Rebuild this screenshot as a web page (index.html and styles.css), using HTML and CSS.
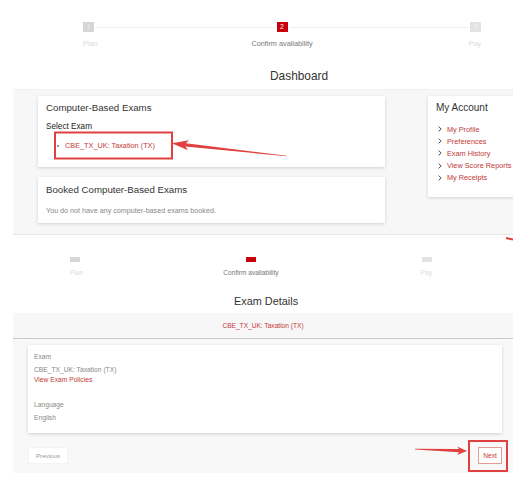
FILE: index.html
```html
<!DOCTYPE html>
<html lang="en">
<head>
<meta charset="utf-8">
<title>Dashboard</title>
<link rel="stylesheet" href="styles.css">
</head>
<body>
  <!-- Dashboard view -->
  <div class="view view-dash">
    <div class="stepper stepper-top">
      <div class="steps-row">
        <span class="step-box step-done">1</span>
        <span class="step-line"></span>
        <span class="step-box step-current">2</span>
        <span class="step-line"></span>
        <span class="step-box step-next">3</span>
      </div>
      <div class="step-labels">
        <span class="step-label step-label-start">Plan</span>
        <span class="step-label step-label-current">Confirm availability</span>
        <span class="step-label step-label-end">Pay</span>
      </div>
    </div>

    <h1 class="page-title dash-title">Dashboard</h1>

    <div class="dash-panel">
      <div class="dash-main">
        <section class="card exams-card">
          <h2 class="card-title">Computer-Based Exams</h2>
          <div class="select-label">Select Exam</div>
          <ul class="exam-list">
            <li class="exam-item"><a class="link">CBE_TX_UK: Taxation (TX)</a></li>
          </ul>
        </section>
        <section class="card booked-card">
          <h2 class="card-title">Booked Computer-Based Exams</h2>
          <p class="muted-note">You do not have any computer-based exams booked.</p>
        </section>
      </div>
      <aside class="card account-card">
        <h2 class="account-title">My Account</h2>
        <ul class="account-links">
          <li><svg class="chev" viewBox="0 0 4 6"><path d="M0.6 0.6 L3.2 3 L0.6 5.4" fill="none" stroke="#444" stroke-width="0.9"/></svg><a class="link">My Profile</a></li>
          <li><svg class="chev" viewBox="0 0 4 6"><path d="M0.6 0.6 L3.2 3 L0.6 5.4" fill="none" stroke="#444" stroke-width="0.9"/></svg><a class="link">Preferences</a></li>
          <li><svg class="chev" viewBox="0 0 4 6"><path d="M0.6 0.6 L3.2 3 L0.6 5.4" fill="none" stroke="#444" stroke-width="0.9"/></svg><a class="link">Exam History</a></li>
          <li><svg class="chev" viewBox="0 0 4 6"><path d="M0.6 0.6 L3.2 3 L0.6 5.4" fill="none" stroke="#444" stroke-width="0.9"/></svg><a class="link">View Score Reports</a></li>
          <li><svg class="chev" viewBox="0 0 4 6"><path d="M0.6 0.6 L3.2 3 L0.6 5.4" fill="none" stroke="#444" stroke-width="0.9"/></svg><a class="link">My Receipts</a></li>
        </ul>
      </aside>
    </div>
  </div>

  <!-- Exam details view -->
  <div class="view view-details">
    <div class="stepper stepper-small">
      <div class="steps-row">
        <span class="step-box step-done"></span>
        <span class="step-gap"></span>
        <span class="step-box step-current"></span>
        <span class="step-gap"></span>
        <span class="step-box step-next"></span>
      </div>
      <div class="step-labels">
        <span class="step-label step-label-start">Plan</span>
        <span class="step-label step-label-current">Confirm availability</span>
        <span class="step-label step-label-end">Pay</span>
      </div>
    </div>

    <h1 class="page-title details-title">Exam Details</h1>

    <div class="details-panel">
      <div class="details-head">CBE_TX_UK: Taxation (TX)</div>
      <div class="details-body">
        <div class="card details-card">
          <div class="field-label">Exam</div>
          <div class="field-value">CBE_TX_UK: Taxation (TX)</div>
          <a class="link policies-link">View Exam Policies</a>
          <div class="field-label field-gap">Language</div>
          <div class="field-value">English</div>
        </div>
        <div class="nav-row">
          <button class="btn btn-prev">Previous</button>
          <button class="btn btn-next">Next</button>
        </div>
      </div>
    </div>
  </div>

  <!-- red callouts drawn over the page -->
  <svg class="callouts" width="532" height="481" viewBox="0 0 532 481">
    <rect x="55" y="132.5" width="117" height="26" fill="none" stroke="#e0403f" stroke-width="2"/>
    <polygon points="171.7,143.3 189.1,140.2 185.8,143.3 286.7,155.7 286.7,156.3 185.4,146.6 188.1,150.2" fill="#e0403f"/>
    <line x1="506" y1="238" x2="513" y2="239.5" stroke="#e0403f" stroke-width="2"/>
    <rect x="469" y="441" width="38" height="30" fill="none" stroke="#e0403f" stroke-width="2"/>
    <polygon points="467,451 457.2,446.6 459.1,449.1 415,448.7 415,449.4 459,452.3 456.9,455" fill="#e0403f"/>
  </svg>
</body>
</html>
```
FILE: styles.css
```css
html, body {
  margin: 0;
  padding: 0;
}

body {
  position: relative;
  width: 532px;
  height: 481px;
  overflow: hidden;
  background: #fff;
  color: #333;
  font-family: "Liberation Sans", Arial, Helvetica, sans-serif;
}

/* ---------- stepper ---------- */
.steps-row {
  display: flex;
  align-items: center;
}

.step-box {
  flex: none;
  text-align: center;
  color: #fff;
}

.step-done { background: #d6d6d6; color: #ececec; }
.step-current { background: #c8000b; }
.step-next { background: #e2e2e2; color: #f2f2f2; }

.step-line {
  flex: 1;
  height: 1px;
  margin: 0 2px;
  background: #eeeeee;
}

.step-gap { flex: 1; }

.step-labels {
  display: grid;
  grid-template-columns: 1fr auto 1fr;
}

.step-label { color: #dcdcdc; white-space: nowrap; }
.step-label-start { justify-self: start; }
.step-label-current { justify-self: center; color: #777; }
.step-label-end { justify-self: end; }

.stepper-top {
  margin-left: 83px;
  width: 398px;
  padding-top: 22px;
}

.stepper-top .step-box {
  width: 11px;
  height: 10px;
  font-size: 7px;
  line-height: 10px;
}

.stepper-top .step-labels {
  margin-top: 7px;
  font-size: 7.3px;
  line-height: 10px;
}

.stepper-small {
  margin-left: 70px;
  width: 362px;
  padding-top: 22px;
}

.stepper-small .step-box {
  width: 10px;
  height: 5px;
}

.stepper-small .step-labels {
  margin-top: 6px;
  font-size: 6.6px;
  line-height: 10px;
}

/* ---------- headings ---------- */
.page-title {
  margin: 0;
  font-weight: normal;
  color: #333;
}

.dash-title {
  margin-top: 20px;
  padding-left: 270px;
  font-size: 11.9px;
  line-height: 14px;
}

.details-title {
  margin-top: 17px;
  text-align: center;
  font-size: 10.9px;
  line-height: 13px;
}

/* ---------- shared ---------- */
.card {
  background: #fff;
  box-shadow: 0 1px 3px rgba(0, 0, 0, 0.16);
}

.link {
  color: #c23a36;
  text-decoration: none;
}

/* ---------- dashboard ---------- */
.dash-panel {
  display: flex;
  align-items: flex-start;
  margin: 6px 0 0 13px;
  width: 500px;
  box-sizing: border-box;
  padding: 6px 0 11px 25px;
  background: #f7f7f7;
  border-top: 1px solid #f0f0f0;
  border-bottom: 1px solid #e8e8e8;
  overflow: hidden;
}

.dash-main {
  flex: none;
  width: 347px;
  display: flex;
  flex-direction: column;
  gap: 10px;
}

.card-title {
  margin: 0;
  font-weight: normal;
  font-size: 9.7px;
  line-height: 12px;
  color: #333;
}

.exams-card {
  height: 71px;
  box-sizing: border-box;
  padding: 6px 8px 0;
}

.select-label {
  margin-top: 8px;
  font-size: 8.2px;
  line-height: 10px;
  color: #222;
}

.exam-list {
  list-style: none;
  margin: 9px 0 0;
  padding: 0 0 0 11px;
}

.exam-item {
  display: flex;
  align-items: center;
  font-size: 7.3px;
  line-height: 10px;
}

.exam-item::before {
  content: "";
  width: 2px;
  height: 2px;
  margin-right: 6px;
  border-radius: 50%;
  background: #777;
}

.booked-card {
  height: 46px;
  box-sizing: border-box;
  padding: 7px 8px 0;
}

.muted-note {
  margin: 10px 0 0;
  font-size: 7.2px;
  line-height: 9px;
  color: #888;
}

.account-card {
  flex: none;
  width: 92px;
  height: 101px;
  box-sizing: border-box;
  margin-left: 43px;
  padding: 6px 0 0 8px;
}

.account-title {
  margin: 0;
  font-weight: normal;
  font-size: 10px;
  line-height: 12px;
  color: #333;
}

.account-links {
  list-style: none;
  margin: 9px 0 0;
  padding: 0;
}

.account-links li {
  display: flex;
  align-items: center;
  height: 12.2px;
  font-size: 7.3px;
  white-space: nowrap;
}

.chev {
  flex: none;
  width: 4px;
  height: 6px;
  margin: 0 5px 0 2px;
}

/* ---------- exam details ---------- */
.details-panel {
  margin: 5px 0 0 13px;
  width: 500px;
}

.details-head {
  height: 25px;
  line-height: 25px;
  text-align: center;
  font-size: 6.6px;
  color: #c23a36;
  background: #f7f7f7;
  border-bottom: 1px solid #c9c9c9;
}

.details-body {
  padding: 6px 11px 9px 15px;
  background: #f8f8f8;
}

.details-card {
  padding: 7px 6px 10px;
  font-size: 6.7px;
  line-height: 10px;
  color: #888;
}

.field-value { margin-top: 3px; }

.policies-link { display: block; }

.field-gap { margin-top: 15px; }

.nav-row {
  display: flex;
  justify-content: space-between;
  margin-top: 14px;
}

.btn {
  height: 17px;
  padding: 0;
  font-family: inherit;
  background: #fff;
  cursor: pointer;
}

.btn-prev {
  width: 40px;
  border: 1px solid #f3f3f3;
  font-size: 6.2px;
  color: #999;
}

.btn-next {
  width: 24px;
  border: 1px solid #e39a98;
  font-size: 6.6px;
  color: #c23a36;
}

/* ---------- callouts ---------- */
.callouts {
  position: absolute;
  left: 0;
  top: 0;
  pointer-events: none;
}
```
